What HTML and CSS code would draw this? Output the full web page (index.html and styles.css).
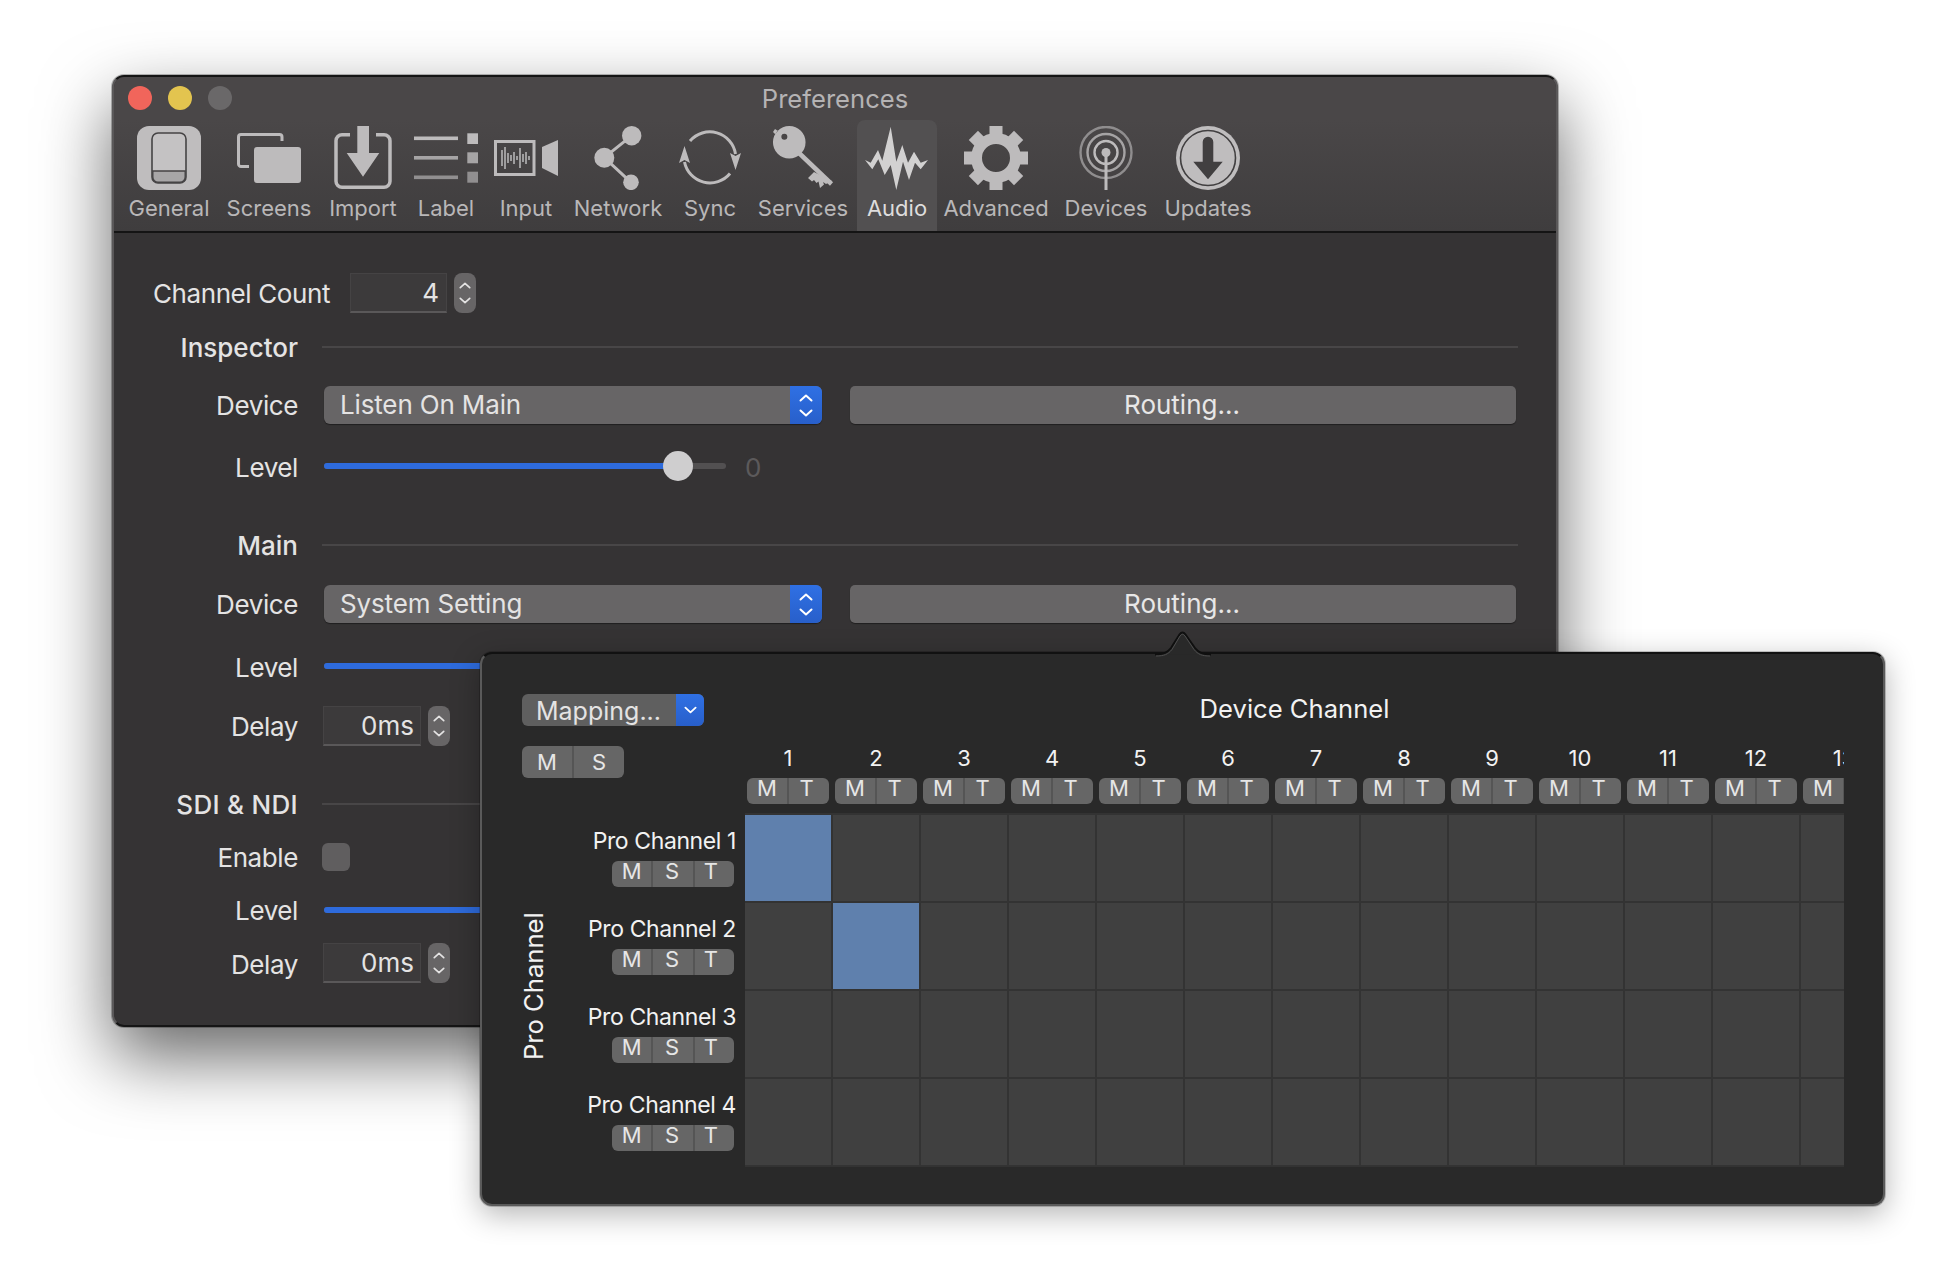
FILE: index.html
```html
<!DOCTYPE html>
<html>
    <head>
        <meta charset="UTF-8">
        <title>Preferences</title>
        <link rel="stylesheet" href="styles.css">
    </head>
    <body>
        <svg class="defs" width="0" height="0">
            <symbol id="chev-up" viewBox="0 0 14 8"><path d="M1.5 6.5 7 1.5l5.5 5" fill="none" stroke="currentColor" stroke-width="2" stroke-linecap="round" stroke-linejoin="round"/></symbol>
            <symbol id="chev-down" viewBox="0 0 14 8"><path d="M1.5 1.5 7 6.5l5.5-5" fill="none" stroke="currentColor" stroke-width="2" stroke-linecap="round" stroke-linejoin="round"/></symbol>
        </svg>

        <div class="window">
            <div class="titlebar">
                <div class="lights">
                    <span class="light red"></span>
                    <span class="light yellow"></span>
                    <span class="light gray"></span>
                </div>
                <div class="title">Preferences</div>
            </div>

            <div class="toolbar">
                <div class="tool">
                    <svg class="icon" viewBox="0 0 64 64">
                        <rect width="64" height="64" rx="12" fill="#bfbdbe"/>
                        <rect x="15" y="7" width="34" height="50" rx="6" fill="#c4c2c3" stroke="#454344" stroke-width="1.6"/>
                        <path d="M15.8 45h32.4v6a5.2 5.2 0 0 1-5.2 5.2H21A5.2 5.2 0 0 1 15.8 51z" fill="#a8a6a7" stroke="#454344" stroke-width="1.4"/>
                    </svg>
                    <span>General</span>
                </div>
                <div class="tool">
                    <svg class="icon" viewBox="0 0 64 64">
                        <path d="M45 15v-4a2.5 2.5 0 0 0-2.500-2.500H4A2.500 2.500 0 0 0 1.500 11v27A2.500 2.500 0 0 0 4 40.500h8" fill="none" stroke="#bdbbbc" stroke-width="3"/>
                        <rect x="17" y="21" width="47" height="36" rx="3" fill="#bdbbbc"/>
                    </svg>
                    <span>Screens</span>
                </div>
                <div class="tool">
                    <svg class="icon" viewBox="0 0 64 64">
                        <path d="M19 8.800h-8A6 6 0 0 0 5 14.800v40.400a6 6 0 0 0 6 6h42a6 6 0 0 0 6-6V14.800a6 6 0 0 0-6-6h-8" fill="none" stroke="#bdbbbc" stroke-width="3.500"/>
                        <path d="M26.300 0H38v27h10.300L32 50.700 15.700 27h10.600z" fill="#bdbbbc"/>
                    </svg>
                    <span>Import</span>
                </div>
                <div class="tool">
                    <svg class="icon" viewBox="0 0 64 64">
                        <rect y="10.500" width="44" height="3.600" fill="#bdbbbc"/>
                        <rect y="30" width="44" height="3.600" fill="#a6a4a5"/>
                        <rect y="49.500" width="44" height="3.600" fill="#918f90"/>
                        <rect x="53.300" y="7.300" width="10.700" height="10.700" fill="#bdbbbc"/>
                        <rect x="53.300" y="26.300" width="10.700" height="11" fill="#a6a4a5"/>
                        <rect x="53.300" y="45.700" width="10.700" height="11" fill="#918f90"/>
                    </svg>
                    <span>Label</span>
                </div>
                <div class="tool">
                    <svg class="icon" viewBox="0 0 64 64">
                        <rect x="1.500" y="15.500" width="38.500" height="33" fill="none" stroke="#bdbbbc" stroke-width="3"/>
                        <path d="M8 24v16M11 21v22M14 27v10M17 29v6M20 26v12M23 30v4M26 22v20M29 28v8M32 26v12M35 30v4" stroke="#bdbbbc" stroke-width="1.500"/>
                        <path d="M48 21 64 14v36l-16-8z" fill="#bdbbbc"/>
                    </svg>
                    <span>Input</span>
                </div>
                <div class="tool">
                    <svg class="icon" viewBox="0 0 64 64">
                        <path d="M45.700 9.700 18.300 31.700 45 56.300" fill="none" stroke="#bdbbbc" stroke-width="3"/>
                        <circle cx="45.700" cy="9.700" r="9.700" fill="#bdbbbc"/>
                        <circle cx="18.300" cy="31.700" r="10" fill="#bdbbbc"/>
                        <circle cx="45" cy="56.300" r="7.800" fill="#bdbbbc"/>
                    </svg>
                    <span>Network</span>
                </div>
                <div class="tool">
                    <svg class="icon" viewBox="0 0 64 64">
                        <path d="M12 15A26 26 0 0 1 57.500 28M52 47.500A26 26 0 0 1 6.500 36" fill="none" stroke="#bdbbbc" stroke-width="3"/>
                        <path d="M6.500 20 1 37l5.500-3 5.500 3zM57.500 44 63 27l-5.500 3-5.500-3z" fill="#bdbbbc"/>
                    </svg>
                    <span>Sync</span>
                </div>
                <div class="tool">
                    <svg class="icon" viewBox="0 0 64 64">
                        <path fill-rule="evenodd" d="M18.300 0a16.300 16.300 0 1 1-.1 32.600A16.300 16.300 0 0 1 18.300 0zM13.300 7.700a3 3 0 1 0 .1 6 3 3 0 0 0-.1-6zM2 6l2-3 3 2-3 3z" fill="#bdbbbc"/>
                        <path d="M28 27 60.500 58" stroke="#bdbbbc" stroke-width="4.500"/>
                        <path d="M43 46 37 52l4 3.500 2-1.500 2.500 3 2-1.500 1.500 6.500 4-3.500-1-2.500 3 2 6-3z" fill="#bdbbbc"/>
                    </svg>
                    <span>Services</span>
                </div>
                <div class="tool active">
                    <svg class="icon" viewBox="0 0 64 64">
                        <path d="M0 34 5.700 36.700 13 24 17.300 34.700 25.700 .7 31.300 35.700 37.300 19 43 36.700 49 25.700 55.700 36.700 63 34 55.700 43.300 50 36.700 44 54 38 35.700 31.300 64 25.700 39 19.700 49 13.300 33.300 7.300 43.300z" fill="#d2d1d1"/>
                    </svg>
                    <span>Audio</span>
                </div>
                <div class="tool">
                    <svg class="icon" viewBox="0 0 64 64">
                        <circle cx="32" cy="32" r="19.500" fill="none" stroke="#bdbbbc" stroke-width="11"/>
                        <g fill="#bdbbbc">
                            <rect x="25.500" width="13" height="12"/>
                            <rect x="25.500" width="13" height="12" transform="rotate(45 32 32)"/>
                            <rect x="25.500" width="13" height="12" transform="rotate(90 32 32)"/>
                            <rect x="25.500" width="13" height="12" transform="rotate(135 32 32)"/>
                            <rect x="25.500" width="13" height="12" transform="rotate(180 32 32)"/>
                            <rect x="25.500" width="13" height="12" transform="rotate(225 32 32)"/>
                            <rect x="25.500" width="13" height="12" transform="rotate(270 32 32)"/>
                            <rect x="25.500" width="13" height="12" transform="rotate(315 32 32)"/>
                        </g>
                    </svg>
                    <span>Advanced</span>
                </div>
                <div class="tool">
                    <svg class="icon" viewBox="0 0 64 64">
                        <g fill="none" stroke-width="2.400">
                            <circle cx="32" cy="26.500" r="25.500" stroke="#8f8d8e"/>
                            <circle cx="32" cy="26.500" r="18.500" stroke="#a5a3a4"/>
                            <circle cx="32" cy="26.500" r="11.500" stroke="#bdbbbc"/>
                        </g>
                        <path d="M28 29h8v7h-8z" fill="#413f40"/>
                        <circle cx="32" cy="26.500" r="4.500" fill="#bdbbbc"/>
                        <path d="M32 27v37" stroke="#bdbbbc" stroke-width="3"/>
                    </svg>
                    <span>Devices</span>
                </div>
                <div class="tool">
                    <svg class="icon" viewBox="0 0 64 64">
                        <circle cx="32" cy="32" r="32" fill="#bfbdbe"/>
                        <circle cx="32" cy="32" r="27.500" fill="none" stroke="#413f40" stroke-width="1.600"/>
                        <path d="M26.700 16a5.300 5.300 0 0 1 10.600 0v19.700h9.400L32 53.300 17.300 35.700h9.400z" fill="#413f40"/>
                    </svg>
                    <span>Updates</span>
                </div>
            </div>

            <div class="form">
                <div class="row">
                    <label class="label label-wide">Channel Count</label>
                    <div class="field field-count">4</div>
                    <div class="stepper"><svg><use href="#chev-up"/></svg><svg><use href="#chev-down"/></svg></div>
                </div>

                <section class="inspector">
                    <div class="row row-head">
                        <div class="label label-head">Inspector</div>
                        <div class="rule"></div>
                    </div>
                    <div class="row row-device">
                        <label class="label">Device</label>
                        <div class="select">
                            <span class="select-text">Listen On Main</span>
                            <span class="select-btn"><svg><use href="#chev-up"/></svg><svg><use href="#chev-down"/></svg></span>
                        </div>
                        <button class="btn-wide">Routing...</button>
                    </div>
                    <div class="row row-level">
                        <label class="label label-low">Level</label>
                        <div class="slider"><div class="slider-fill" style="width: 88%"></div><div class="knob" style="left: 88%"></div></div>
                        <span class="slider-value">0</span>
                    </div>
                </section>

                <section class="main-out">
                    <div class="row row-head">
                        <div class="label label-head">Main</div>
                        <div class="rule"></div>
                    </div>
                    <div class="row row-device">
                        <label class="label">Device</label>
                        <div class="select">
                            <span class="select-text">System Setting</span>
                            <span class="select-btn"><svg><use href="#chev-up"/></svg><svg><use href="#chev-down"/></svg></span>
                        </div>
                        <button class="btn-wide">Routing...</button>
                    </div>
                    <div class="row row-level">
                        <label class="label label-low">Level</label>
                        <div class="slider"><div class="slider-fill" style="width: 88%"></div><div class="knob" style="left: 88%"></div></div>
                        <span class="slider-value">0</span>
                    </div>
                    <div class="row row-delay">
                        <label class="label">Delay</label>
                        <div class="field field-delay">0ms</div>
                        <div class="stepper"><svg><use href="#chev-up"/></svg><svg><use href="#chev-down"/></svg></div>
                    </div>
                </section>

                <section class="sdi">
                    <div class="row row-head">
                        <div class="label label-head">SDI &amp; NDI</div>
                        <div class="rule"></div>
                    </div>
                    <div class="row row-enable">
                        <label class="label">Enable</label>
                        <div class="checkbox"></div>
                    </div>
                    <div class="row row-tight">
                        <label class="label">Level</label>
                        <div class="slider"><div class="slider-fill" style="width: 88%"></div><div class="knob" style="left: 88%"></div></div>
                        <span class="slider-value">0</span>
                    </div>
                    <div class="row row-tight">
                        <label class="label label-low">Delay</label>
                        <div class="field field-delay">0ms</div>
                        <div class="stepper"><svg><use href="#chev-up"/></svg><svg><use href="#chev-down"/></svg></div>
                    </div>
                </section>
            </div>
        </div>

        <div class="popover">
            <svg class="popover-arrow" viewBox="0 0 56 27">
                <path d="M0 26.500C8 26.500 12 25 16 20L24.500 6.500Q27.500 2.500 30.500 6.500L40 20C44 25 48 26.500 56 26.500" fill="#292929" stroke="#0f0f0f" stroke-width="2"/>
                <path d="M1 28C9 28 13 26.500 17 21.500L25 8Q27.500 4.500 30 8L39 21.500C43 26.500 47 28 55 28" fill="none" stroke="#4e4e4e" stroke-width="1"/>
            </svg>

            <div class="pop-top">
                <div class="pop-side">
                    <div class="mapping">
                        <span class="mapping-text">Mapping...</span>
                        <span class="mapping-btn"><svg><use href="#chev-down"/></svg></span>
                    </div>
                    <div class="seg seg-ms"><span>M</span><span>S</span></div>
                </div>
                <div class="pop-cols">
                    <div class="cols-title">Device Channel</div>
                    <div class="cols-head">
                        <div class="col-head"><div class="col-num">1</div><div class="seg seg-small"><span>M</span><span>T</span></div></div>
                        <div class="col-head"><div class="col-num">2</div><div class="seg seg-small"><span>M</span><span>T</span></div></div>
                        <div class="col-head"><div class="col-num">3</div><div class="seg seg-small"><span>M</span><span>T</span></div></div>
                        <div class="col-head"><div class="col-num">4</div><div class="seg seg-small"><span>M</span><span>T</span></div></div>
                        <div class="col-head"><div class="col-num">5</div><div class="seg seg-small"><span>M</span><span>T</span></div></div>
                        <div class="col-head"><div class="col-num">6</div><div class="seg seg-small"><span>M</span><span>T</span></div></div>
                        <div class="col-head"><div class="col-num">7</div><div class="seg seg-small"><span>M</span><span>T</span></div></div>
                        <div class="col-head"><div class="col-num">8</div><div class="seg seg-small"><span>M</span><span>T</span></div></div>
                        <div class="col-head"><div class="col-num">9</div><div class="seg seg-small"><span>M</span><span>T</span></div></div>
                        <div class="col-head"><div class="col-num">10</div><div class="seg seg-small"><span>M</span><span>T</span></div></div>
                        <div class="col-head"><div class="col-num">11</div><div class="seg seg-small"><span>M</span><span>T</span></div></div>
                        <div class="col-head"><div class="col-num">12</div><div class="seg seg-small"><span>M</span><span>T</span></div></div>
                        <div class="col-head"><div class="col-num">13</div><div class="seg seg-small"><span>M</span><span>T</span></div></div>
                    </div>
                </div>
            </div>

            <div class="pop-body">
                <div class="pop-rows">
                    <div class="vertical-label">Pro Channel</div>
                    <div class="row-heads">
                        <div class="row-name"><div>Pro Channel 1</div><div class="seg seg-small seg-mst"><span>M</span><span>S</span><span>T</span></div></div>
                        <div class="row-name"><div>Pro Channel 2</div><div class="seg seg-small seg-mst"><span>M</span><span>S</span><span>T</span></div></div>
                        <div class="row-name"><div>Pro Channel 3</div><div class="seg seg-small seg-mst"><span>M</span><span>S</span><span>T</span></div></div>
                        <div class="row-name"><div>Pro Channel 4</div><div class="seg seg-small seg-mst"><span>M</span><span>S</span><span>T</span></div></div>
                    </div>
                </div>
                <div class="matrix">
                    <i class="on"></i><i></i><i></i><i></i><i></i><i></i><i></i><i></i><i></i><i></i><i></i><i></i><i></i>
                    <i></i><i class="on"></i><i></i><i></i><i></i><i></i><i></i><i></i><i></i><i></i><i></i><i></i><i></i>
                    <i></i><i></i><i></i><i></i><i></i><i></i><i></i><i></i><i></i><i></i><i></i><i></i><i></i>
                    <i></i><i></i><i></i><i></i><i></i><i></i><i></i><i></i><i></i><i></i><i></i><i></i><i></i>
                </div>
            </div>
        </div>
    </body>
</html>
```

FILE: styles.css
```css
body {
    font-family: 'Inter', 'Liberation Sans', sans-serif;
    margin: 0;
    padding: 75px 0 0 112px;
    background: white;
    height: 1286px;
    box-sizing: border-box;
    overflow: hidden;
    position: relative;
    color: #e4e3e3;
}

.defs {
    position: absolute;
}

.window {
    width: 1446px;
    height: 952px;
    box-sizing: border-box;
    background: #353334;
    border: 2px solid #5a5859;
    border-top-color: #151515;
    border-bottom-color: #151515;
    border-radius: 12px;
    box-shadow: 0 0 0 1px rgba(0,0,0,0.25), 0 30px 70px rgba(0,0,0,0.6);
    overflow: hidden;
}

.titlebar {
    position: relative;
    height: 43px;
    display: flex;
    align-items: center;
    justify-content: center;
    background: #4a4748;
}

.lights {
    position: absolute;
    left: 14px;
    top: 9px;
    display: flex;
    gap: 16px;
}

.light {
    width: 24px;
    height: 24px;
    border-radius: 50%;
}

.red { background: #f1655b; }
.yellow { background: #e3c44f; }
.gray { background: #6a6869; }

.title {
    font-size: 25.6px;
    color: #b5b3b4;
}

.toolbar {
    display: grid;
    grid-template-columns: 96px 104px 84px 82px 78px 106px 78px 108px 80px 118px 102px 102px;
    height: 111px;
    padding-left: 7px;
    background: linear-gradient(#4a4748, #3f3d3e);
    border-bottom: 2px solid #141414;
    box-sizing: content-box;
}

.tool {
    display: flex;
    flex-direction: column;
    align-items: center;
    padding-top: 6px;
    border-radius: 8px 8px 0 0;
    font-size: 22px;
    color: #b9b7b8;
}

.tool span {
    margin-top: 5px;
    white-space: nowrap;
}

.tool.active {
    background: #525051;
    color: #dedddd;
}

.icon {
    width: 64px;
    height: 64px;
    flex: none;
}

.form {
    padding-top: 40px;
}

.row {
    display: flex;
    align-items: center;
    height: 40px;
    font-size: 26px;
}

.label {
    width: 184px;
    margin-right: 26px;
    text-align: right;
    flex: none;
    letter-spacing: -0.4px;
}

.label-wide {
    width: 216px;
    margin-right: 20px;
}

.label-low {
    margin-top: 2px;
}

.label-head {
    font-weight: 500;
    margin-right: 24px;
    letter-spacing: 0;
}

.sdi .label-head {
    letter-spacing: 0.3px;
}

.row-head {
    height: 24px;
    margin-top: 22px;
}

.rule {
    width: 1196px;
    height: 2px;
    background: #484647;
}

section.main-out .row-head { margin-top: 47px; }
section.sdi .row-head { margin-top: 46px; }

.row-device { margin-top: 26px; }
.row-level { margin-top: 22px; }
.inspector .row-level { margin-top: 21px; }
.main-out .row-device { margin-top: 27px; }
.row-delay { margin-top: 20px; }
.row-enable { margin-top: 21px; }
.row-tight { margin-top: 13px; }

.field {
    height: 40px;
    box-sizing: border-box;
    line-height: 38px;
    text-align: right;
    background: #3c3a3b;
    border: 1px solid #454344;
    border-bottom: 2px solid #5a5859;
}

.field-count {
    width: 97px;
    padding-right: 7px;
}

.field-delay {
    width: 98px;
    margin-left: -1px;
    padding-right: 6px;
}

.stepper {
    width: 22px;
    height: 40px;
    margin-left: 7px;
    border-radius: 8px;
    background: #676566;
    color: #e4e3e3;
    display: flex;
    flex-direction: column;
    align-items: center;
    justify-content: center;
    gap: 8px;
}

.stepper svg {
    width: 12px;
    height: 7px;
}

.select {
    width: 498px;
    height: 38px;
    display: flex;
    align-items: center;
    justify-content: space-between;
    background: #676566;
    border-radius: 6px;
    overflow: hidden;
    box-shadow: 0 1px 1px rgba(0,0,0,0.4);
}

.select-text {
    padding: 0 0 2px 16px;
    letter-spacing: -0.15px;
}

.select-btn {
    width: 32px;
    height: 38px;
    background: linear-gradient(#2f70e4, #285fca);
    color: white;
    display: flex;
    flex-direction: column;
    align-items: center;
    justify-content: center;
    gap: 7px;
}

.select-btn svg {
    width: 14px;
    height: 8px;
}

.btn-wide {
    width: 666px;
    height: 38px;
    margin-left: 28px;
    padding: 0 2px 2px 0;
    border: none;
    border-radius: 5px;
    background: #676566;
    color: #e8e7e7;
    font: inherit;
    box-shadow: 0 1px 1px rgba(0,0,0,0.4);
}

.slider {
    position: relative;
    width: 402px;
    height: 6px;
    border-radius: 3px;
    background: #525051;
    flex: none;
}

.slider-fill {
    height: 6px;
    border-radius: 3px;
    background: #2e6bdc;
}

.knob {
    position: absolute;
    top: -12px;
    width: 30px;
    height: 30px;
    margin-left: -15px;
    border-radius: 50%;
    background: #cfcecf;
}

/* sits right under the popover edge, would poke out above it */
.main-out .knob {
    top: -9px;
    height: 26px;
}

.slider-value {
    margin: 2px 0 0 19px;
    color: #5c5a5b;
}

.checkbox {
    width: 28px;
    height: 28px;
    margin-left: -2px;
    border-radius: 6px;
    background: #605e5f;
}

.popover {
    position: absolute;
    left: 480px;
    top: 652px;
    width: 1405px;
    height: 554px;
    box-sizing: border-box;
    padding: 40px 0 0 40px;
    background: #292929;
    border: 2px solid #5a5a5a;
    border-top-color: #111;
    border-radius: 12px;
    box-shadow: 0 0 0 1px rgba(0,0,0,0.2), 0 8px 30px rgba(0,0,0,0.3);
}

.popover-arrow {
    position: absolute;
    left: 673px;
    top: -27px;
    width: 56px;
    height: 29px;
    overflow: visible;
}

.pop-top {
    display: flex;
}

.pop-side {
    width: 223px;
    flex: none;
}

.mapping {
    width: 182px;
    height: 32px;
    display: flex;
    justify-content: space-between;
    align-items: center;
    background: #5f5f5f;
    border-radius: 6px;
    overflow: hidden;
    font-size: 25px;
}

.mapping-text {
    padding: 2px 0 0 14px;
}

.mapping-btn {
    width: 28px;
    height: 32px;
    background: linear-gradient(#2f70e4, #285fca);
    color: white;
    display: flex;
    align-items: center;
    justify-content: center;
}

.mapping-btn svg {
    width: 13px;
    height: 8px;
}

.seg {
    display: flex;
    background: #666;
    border-radius: 6px;
    color: #e6e6e6;
    text-align: center;
}

.seg span {
    flex: 1;
    border-left: 2px solid #555;
}

.seg span:first-child {
    border-left: none;
}

.seg-ms {
    width: 102px;
    height: 32px;
    margin-top: 20px;
    font-size: 22px;
    line-height: 32px;
}

.seg-small {
    width: 82px;
    height: 26px;
    font-size: 22px;
    line-height: 20px;
}

.seg-small span:last-child {
    text-indent: -5px;
}

.seg-mst {
    width: 122px;
    margin-top: 7px;
    margin-right: 2px;
    letter-spacing: 0;
}

.seg-mst span:nth-child(2) {
    text-indent: -2px;
}

.seg-mst span:last-child {
    text-indent: -7px;
}

.pop-cols {
    width: 1099px;
    overflow: hidden;
}

.cols-title {
    height: 28px;
    margin-bottom: 24px;
    font-size: 25.6px;
    line-height: 30px;
    text-align: center;
    color: #f2f2f2;
}

.cols-head {
    display: flex;
    gap: 2px;
}

.col-head {
    width: 86px;
    flex: none;
    display: flex;
    flex-direction: column;
    align-items: center;
}

.col-num {
    height: 32px;
    line-height: 24px;
    font-size: 22px;
    color: #f2f2f2;
}

.pop-body {
    display: flex;
    margin-top: 9px;
}

.pop-rows {
    width: 223px;
    flex: none;
    display: flex;
    justify-content: space-between;
}

.vertical-label {
    writing-mode: vertical-rl;
    transform: rotate(180deg);
    font-size: 25.6px;
    text-align: center;
    height: 346px;
    width: 28px;
    margin-left: -4px;
    color: #f2f2f2;
}

.row-heads {
    padding-top: 2px;
    width: 190px;
    margin-right: 9px;
}

.row-name {
    height: 75px;
    padding-top: 13px;
    display: flex;
    flex-direction: column;
    align-items: flex-end;
    font-size: 23px;
    line-height: 26px;
    letter-spacing: -0.4px;
    color: #f2f2f2;
}

.matrix {
    width: 1099px;
    overflow: hidden;
    display: grid;
    grid-template-columns: repeat(13, 86px);
    grid-auto-rows: 86px;
    gap: 2px;
    padding-top: 2px;
    background: #333;
}

.matrix i {
    background: #404040;
}

.matrix i.on {
    background: #5f80ad;
}
```
